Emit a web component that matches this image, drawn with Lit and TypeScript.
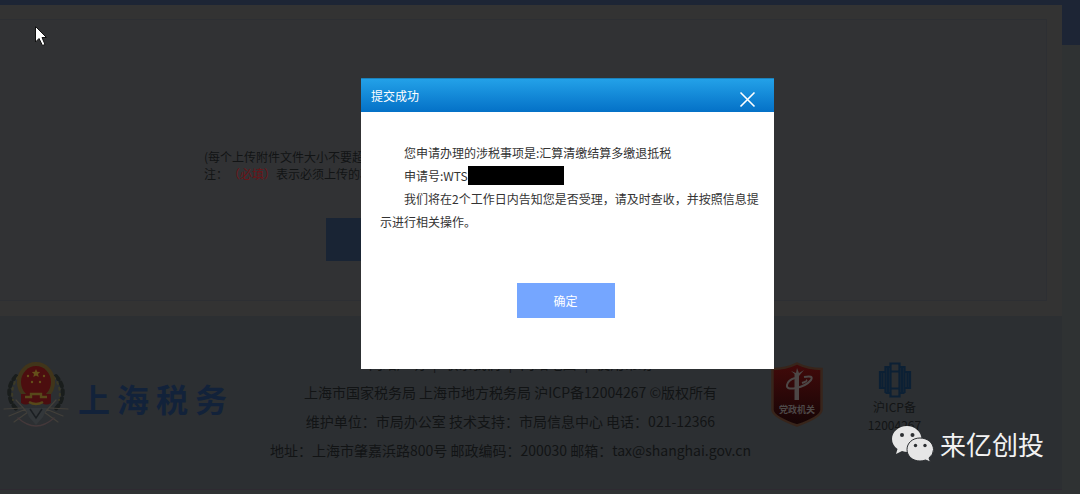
import { LitElement, html, css, svg } from "lit";
import { customElement, state } from "lit/decorators.js";

const fontStack = css`"Noto Sans CJK SC", "Noto Sans", sans-serif`;

const emblem = svg`
  <g fill="none" stroke-linecap="round">
    <path d="M14 14 Q5 24 8 36 Q10 44 17 49 M54 14 Q63 24 60 36 Q58 44 51 49" stroke="#191d1c" stroke-dasharray="4 4" stroke-width="4"/>
    <path d="M16 15 Q8 26 11 38 M52 15 Q60 26 57 38" stroke="#3c3a26" stroke-dasharray="2 4" stroke-width="2"/>
    <path d="M2 47 L20 46 M7 54 L24 47 M12 60 L26 50 M66 47 L48 46 M61 54 L44 47 M56 60 L42 50 M14 38 L25 50 M54 38 L43 50" stroke="#43403a" stroke-width="1.2"/>
    <path d="M16 56 Q34 72 52 56 M23 61 Q34 67 45 61" stroke="#44383a" stroke-width="1.400"/>
  </g>
  <path d="M23 46 h22 l-4 9 -7 8 -7 -8z" fill="#33373a"/>
  <path d="M28 47 l6 9 6 -9" fill="none" stroke="#1b1f22" stroke-width="1.500"/>
  <ellipse cx="34" cy="20" rx="17" ry="18" fill="#4c0e0f" stroke="#41351a" stroke-width="4"/>
  <path d="M19 32 h30 v9 q-5 3 -9 0 h-12 q-4 3 -9 0z" fill="#4a0e10"/>
  <path d="M23 35 h6 v-3 h10 v3 h6 M27 40 q7 4 14 0" fill="none" stroke="#57481a" stroke-width="2.400"/>
  <path d="M34 7 l1.200 2.700 3 .3 -2.200 2 .7 3 -2.700 -1.500 -2.700 1.500 .7 -3 -2.200 -2 3 -.3z" fill="#65501a"/>
  <g fill="#65501a"><circle cx="26" cy="14" r="1.200"/><circle cx="42" cy="14" r="1.200"/><circle cx="30" cy="20" r="1.200"/><circle cx="38" cy="20" r="1.200"/></g>`;

@customElement("app-root")
export class AppRoot extends LitElement {
  @state() private open = true;

  static styles = css`
    :host {
      display: block;
      position: relative;
      min-height: 100vh;
      overflow: hidden;
      background: #2f3233;
      color: #121415;
      font-family: ${fontStack};
      font-size: 12px;
      text-spacing-trim: space-all;
    }
    * { box-sizing: border-box; }
    p { margin: 0; }
    button { font: inherit; border: 0; padding: 0; cursor: pointer; }
    a { color: inherit; text-decoration: none; }
    .backdrop { position: absolute; inset: 0 0 auto; height: 45px; background: #1d2535; }
    .page { position: relative; margin: 5px 18px 0 0; background: #333; }
    .frame { padding: 14px 15px 15px 0; }
    .upload {
      height: 282px;
      padding: 128px 0 0 204px;
      background: #313234;
      border: solid #2d2f33;
      border-width: 1px 1px 1px 0;
      line-height: 17px;
    }
    .required { color: #6b1317; }
    .submit { display: block; width: 410px; height: 43px; margin: 36px 0 0 122px; background: #192434; color: #4b4f55; }
    .footer {
      display: grid;
      grid-template-columns: 250px 1fr 291px;
      height: 174px;
      background: #2c2f32;
      border-bottom: 1px solid #2e2a31;
    }
    .brand { display: flex; align-items: flex-start; gap: 8px; padding: 46px 0 0 2px; }
    .emblem { width: 68px; height: 70px; flex: none; }
    .name { display: flex; gap: 7px; padding-top: 12px; font-size: 32px; line-height: 48px; font-weight: 700; color: #12223a; }
    .info { padding-top: 33px; text-align: center; font-size: 14px; line-height: 29px; white-space: nowrap; }
    .links { display: flex; justify-content: center; gap: 8px; }
    .badges { display: flex; align-items: flex-start; gap: 34px; padding: 46px 0 0; }
    .shield { width: 52px; height: 66px; }
    .icp { display: block; width: 75px; text-align: center; line-height: 18px; }
    .globe { display: block; width: 34px; height: 36px; margin: 0 auto; }
    .dialog {
      position: absolute;
      top: 78px;
      left: calc(50% + 27px);
      width: 413px;
      margin-left: -206px;
      background: #fff;
      color: #333;
    }
    .dialog-head {
      display: flex;
      justify-content: space-between;
      height: 34px;
      padding: 0 18px 0 10px;
      line-height: 34px;
      color: #fff;
      background: linear-gradient(#23a1e8, #0471c7);
      border-top: 1px solid #1b82bb;
    }
    .title { margin: 0; font-size: 12px; font-weight: 400; }
    .close { height: 17px; width: 17px; margin-top: 12px; background: none; color: #fff; }
    .close svg { display: block; width: 17px; height: 17px; }
    .message { padding: 29px 8px 0 19px; line-height: 23px; }
    .message p { text-indent: 2em; }
    .masked { display: inline-block; width: 96px; height: 19px; background: #000; }
    .number { display: flex; align-items: center; height: 23px; }
    .actions { display: flex; justify-content: center; padding: 50px 4px 51px 0; }
    .confirm { width: 98px; height: 35px; background: #75a6ff; color: #fff; }
    .cursor { position: absolute; left: 34px; top: 25px; width: 14px; height: 22px; }
    .account { position: absolute; right: 36px; bottom: 31px; display: flex; align-items: center; gap: 6px; color: #f2f2f2; font-size: 26px; line-height: 38px; }
    .account svg { width: 42px; height: 36px; }
  `;

  private dismiss() {
    this.open = false;
  }

  private renderDialog() {
    return html`
      <section class="dialog" role="dialog" aria-labelledby="title">
        <header class="dialog-head">
          <h2 class="title" id="title">提交成功</h2>
          <button class="close" aria-label="关闭" @click=${this.dismiss}>
            <svg viewBox="0 0 17 17"><path d="M1.5 1.5 L15.5 15.5 M15.5 1.5 L1.5 15.5" stroke="currentColor" stroke-width="1.6"/></svg>
          </button>
        </header>
        <div class="message">
          <p>您申请办理的涉税事项是:汇算清缴结算多缴退抵税</p>
          <p class="number">申请号:WTS<span class="masked"></span></p>
          <p>我们将在2个工作日内告知您是否受理，请及时查收，并按照信息提示进行相关操作。</p>
        </div>
        <div class="actions"><button class="confirm" @click=${this.dismiss}>确定</button></div>
      </section>`;
  }

  render() {
    return html`
      <div class="backdrop"></div>
      <div class="page">
        <main class="frame">
          <div class="upload">
            <p>(每个上传附件文件大小不要超过</p>
            <p>注：<span class="required">（必填）</span>表示必须上传的项</p>
            <button class="submit" aria-label="提交"></button>
          </div>
        </main>
        <footer class="footer">
          <div class="brand">
            <svg class="emblem" viewBox="0 0 68 70">${emblem}</svg>
            <div class="name"><span>上</span><span>海</span><span>税</span><span>务</span></div>
          </div>
          <div class="info">
            <nav class="links"><a href="#">网站声明</a>|<a href="#">联系我们</a>|<a href="#">网站地图</a>|<a href="#">使用帮助</a></nav>
            <p>上海市国家税务局 上海市地方税务局 沪ICP备12004267 ©版权所有</p>
            <p>维护单位：市局办公室 技术支持：市局信息中心 电话：021-12366</p>
            <p>地址：上海市肇嘉浜路800号 邮政编码：200030 邮箱：tax@shanghai.gov.cn</p>
          </div>
          <div class="badges">
            <svg class="shield" viewBox="0 0 52 66" role="img" aria-label="党政机关">
              <defs><linearGradient id="red" x2="0" y2="1"><stop offset="0" stop-color="#420a0a"/><stop offset="1" stop-color="#150506"/></linearGradient></defs>
              <path d="M1.500 7 Q15 7 26 1.500 Q37 7 50.500 7 V48 Q50 55 26 63.500 Q2 55 1.500 48Z" fill="url(#red)" stroke="#38251b" stroke-width="2.500"/>
              <path d="M23.500 38 V12 L20 9 L25 11 L26 6 L28 11 L33 8 L28 14 V38Z" fill="#4d4746"/>
              <path d="M33 15 Q43 13 40 18 Q35 24 25 26 Q15 28 16 23 Q17 18 24 16 M35 18 Q37 19 31 21" fill="none" stroke="#4d4746" stroke-width="2"/>
              <text x="26" y="51" text-anchor="middle" font-size="9" font-weight="700" fill="#4d4847">党政机关</text>
            </svg>
            <a class="icp" href="#">
              <svg class="globe" viewBox="0 0 34 36"><g fill="none" stroke="#0c2034" stroke-width="2.200"><path d="M12.500 1.500 h9 v33 h-9z M7.500 31 V5 h5 M26.500 31 V5 h-5 M7.500 31 h5 M26.500 31 h-5 M7.500 10 H2 V26 H7.500 M26.500 10 H32 V26 H26.500 M4.500 10 v16 M29.500 10 v16 M10 5 v26 M24 5 v26 M12.500 9.500 h9 M12.500 26.500 h9"/></g></svg>
              沪ICP备<br>12004267
            </a>
          </div>
        </footer>
      </div>
      ${this.open ? this.renderDialog() : null}
      <svg class="cursor" viewBox="0 0 14 22"><path d="M1.500 1.500 V17 L5 13.500 L8.500 20.500 L11 19.500 L8 12.500 H12.500Z" fill="#fff" stroke="#111" stroke-width="1"/></svg>
      <div class="account">
        <svg viewBox="0 0 42 36">
          <path d="M15 0 C6.500 0 0 6 0 13 c0 4 2 7.500 5.500 10 L4 28 l6 -3 q5 1.500 9 .5 Q28 24 29.500 13 C29.500 6 23 0 15 0Z" fill="#e6e6e6"/>
          <path d="M28 12 c-7.500 0 -13 5 -13 11.500 S20.500 35 28 35 q3 0 5.500 -1 l5 2 -1.500 -4 q4.500 -3.500 4.500 -8.500 C41.500 17 35.500 12 28 12Z" fill="#e6e6e6" stroke="#2c2f32"/>
          <g fill="#2c2f32"><circle cx="10" cy="9" r="2"/><circle cx="20.500" cy="9" r="2"/><circle cx="23.500" cy="19.500" r="1.700"/><circle cx="33" cy="19.500" r="1.700"/></g>
        </svg>
        <span>来亿创投</span>
      </div>`;
  }
}
